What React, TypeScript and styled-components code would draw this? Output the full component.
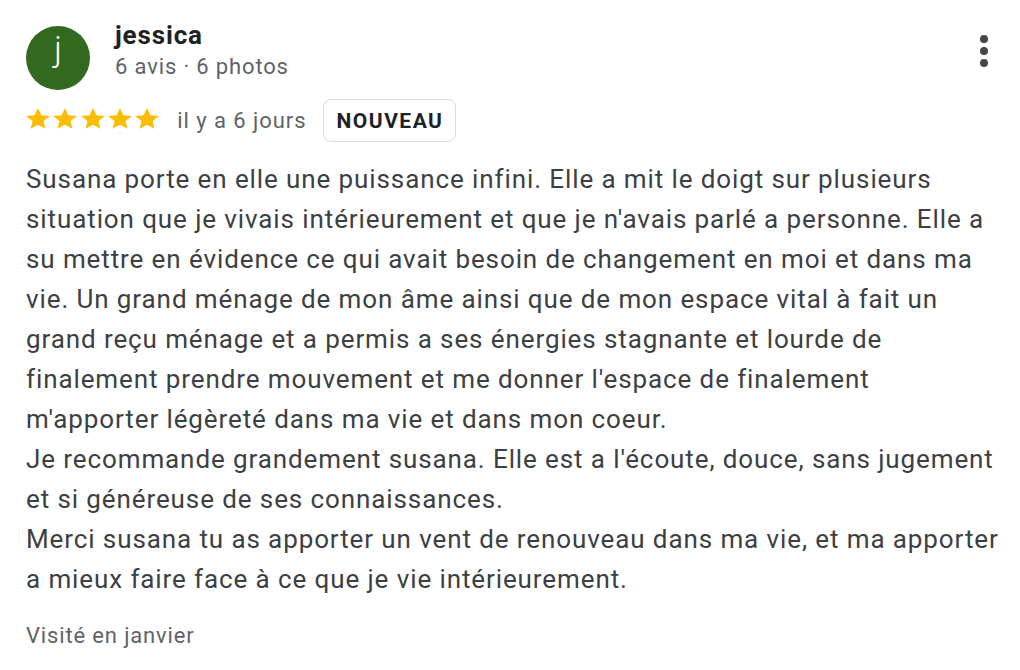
import styled, { createGlobalStyle } from 'styled-components';

const GlobalStyle = createGlobalStyle`
  html, body {
    margin: 0;
    padding: 0;
    background: #fff;
  }
  body {
    font-family: Roboto, "Liberation Sans", Arial, sans-serif;
    -webkit-font-smoothing: antialiased;
  }
`;

const Review = styled.article`
  width: 1020px;
  height: 670px;
  box-sizing: border-box;
  padding: 18px 0 0 26px;
  color: #3c4043;
  letter-spacing: 0.85px;
`;

const Header = styled.header`
  display: flex;
  align-items: flex-start;
  gap: 25px;
`;

const Avatar = styled.div`
  width: 64px;
  height: 64px;
  border-radius: 50%;
  background: #33691e;
  color: #fff;
  display: flex;
  align-items: center;
  justify-content: center;
  font-size: 35px;
  font-weight: 300;
  letter-spacing: 0;
  flex-shrink: 0;
  margin-top: 8px;
  padding-bottom: 18px;
  box-sizing: border-box;
`;

const Author = styled.div`
  flex: 1;
  display: flex;
  flex-direction: column;
`;

const Name = styled.div`
  font-size: 26px;
  font-weight: 700;
  color: #202124;
  line-height: 34px;
`;

const Meta = styled.div`
  font-size: 22px;
  color: #5f6368;
  line-height: 30px;
`;

const MoreButton = styled.button`
  border: none;
  background: none;
  padding: 0;
  margin: 17px 32px 0 0;
  display: flex;
  flex-direction: column;
  align-items: center;
  gap: 4px;
`;

const Dot = styled.span`
  width: 8px;
  height: 8px;
  border-radius: 50%;
  background: #444746;
`;

const RatingRow = styled.div`
  display: flex;
  align-items: center;
  margin-top: 9px;
  height: 43px;
`;

const Stars = styled.div`
  display: flex;
  gap: 3.3px;
  margin-top: -4px;
`;

const Time = styled.span`
  font-size: 22px;
  color: #5f6368;
  margin-left: 18px;
  letter-spacing: 0.95px;
`;

const Badge = styled.span`
  margin-left: 16px;
  height: 43px;
  box-sizing: border-box;
  padding: 0 12px 0 13px;
  border: 1.5px solid #dadce0;
  border-radius: 8px;
  display: inline-flex;
  align-items: center;
  font-size: 21px;
  font-weight: 700;
  color: #202124;
  letter-spacing: 1.5px;
`;

const Body = styled.p`
  margin: 17px 0 0;
  width: 980px;
  font-size: 26px;
  line-height: 40px;
  color: #3c4043;
  letter-spacing: 0.9px;
  white-space: pre-line;
`;

const Visited = styled.div`
  margin-top: 24px;
  font-size: 22px;
  color: #5f6368;
`;

const Star = () => (
  <svg width="24" height="21" viewBox="2 2 20 19.27" preserveAspectRatio="none">
    <path
      fill="#fbbc04"
      d="M12 17.27L18.18 21l-1.64-7.03L22 9.24l-7.19-.61L12 2 9.19 8.63 2 9.24l5.46 4.73L5.82 21z"
    />
  </svg>
);

const text = `Susana porte en elle une puissance infini. Elle a mit le doigt sur plusieurs situation que je vivais intérieurement et que je n'avais parlé a personne. Elle a su mettre en évidence ce qui avait besoin de changement en moi et dans ma vie. Un grand ménage de mon âme ainsi que de mon espace vital à fait un grand reçu ménage et a permis a ses énergies stagnante et lourde de finalement prendre mouvement et me donner l'espace de finalement m'apporter légèreté dans ma vie et dans mon coeur.
Je recommande grandement susana. Elle est a l'écoute, douce, sans jugement et si généreuse de ses connaissances.
Merci susana tu as apporter un vent de renouveau dans ma vie, et ma apporter a mieux faire face à ce que je vie intérieurement.`;

export default function App() {
  return (
    <>
      <GlobalStyle />
      <Review>
        <Header>
          <Avatar>j</Avatar>
          <Author>
            <Name>jessica</Name>
            <Meta>6 avis · 6 photos</Meta>
          </Author>
          <MoreButton aria-label="Plus d'options">
            <Dot />
            <Dot />
            <Dot />
          </MoreButton>
        </Header>
        <RatingRow>
          <Stars>
            {[0, 1, 2, 3, 4].map((i) => (
              <Star key={i} />
            ))}
          </Stars>
          <Time>il y a 6 jours</Time>
          <Badge>NOUVEAU</Badge>
        </RatingRow>
        <Body>{text}</Body>
        <Visited>Visité en janvier</Visited>
      </Review>
    </>
  );
}
